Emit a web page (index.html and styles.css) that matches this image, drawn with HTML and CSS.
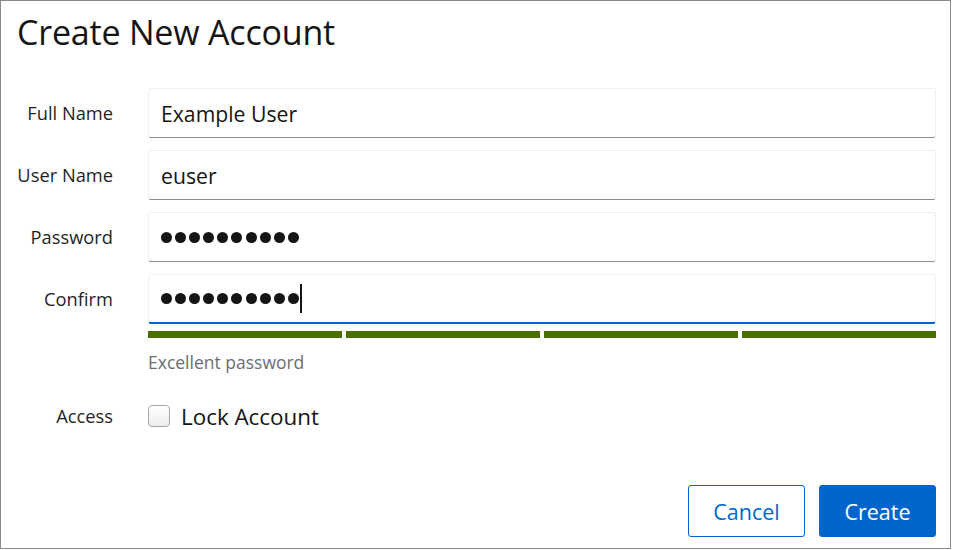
FILE: index.html
```html
<!DOCTYPE html>
<html>
<head>
<meta charset="utf-8">
<link rel="stylesheet" href="styles.css">
</head>
<body>
<div class="dialog">
  <h1 class="title">Create New Account</h1>
  <form class="form">
    <label class="label">Full Name</label>
    <div class="input"><span class="value">Example User</span></div>

    <label class="label">User Name</label>
    <div class="input"><span class="value">euser</span></div>

    <label class="label">Password</label>
    <div class="input">
      <span class="dots"><i></i><i></i><i></i><i></i><i></i><i></i><i></i><i></i><i></i><i></i></span>
    </div>

    <label class="label">Confirm</label>
    <div class="field">
      <div class="input focused">
        <span class="dots"><i></i><i></i><i></i><i></i><i></i><i></i><i></i><i></i><i></i><i></i></span><span class="caret"></span>
      </div>
      <div class="meter"><span></span><span></span><span></span><span></span></div>
      <div class="helper">Excellent password</div>
    </div>

    <label class="label access">Access</label>
    <div class="check-row">
      <span class="checkbox"></span>
      <span class="check-label">Lock Account</span>
    </div>
  </form>
  <div class="footer">
    <button type="button" class="btn secondary">Cancel</button>
    <button type="button" class="btn primary">Create</button>
  </div>
</div>
</body>
</html>
```

FILE: styles.css
```css
* { box-sizing: border-box; }
html, body { margin: 0; padding: 0; background: #fff; }
body {
  font-family: "Open Sans", "Noto Sans", sans-serif;
  color: #151515;
}
.dialog {
  width: 951px;
  height: 549px;
  border: 1px solid #8a8a8a;
  display: flex;
  flex-direction: column;
}
.title {
  margin: 0;
  padding: 11px 0 0 16px;
  font-size: 34px;
  font-weight: 400;
  line-height: 40px;
  letter-spacing: -0.2px;
}
.form {
  display: grid;
  grid-template-columns: 96px 1fr;
  column-gap: 35px;
  row-gap: 12px;
  padding: 36px 14px 0 16px;
  align-items: start;
}
.label {
  text-align: right;
  font-size: 18.3px;
  line-height: 50px;
  height: 50px;
  color: #1f1f1f;
}
.input {
  height: 50px;
  border: 1px solid #f0f0f0;
  border-bottom-color: #8a8d90;
  border-radius: 3px;
  display: flex;
  align-items: center;
  padding: 0 12px;
  font-size: 21.2px;
  background: #fff;
}
.input.focused {
  border-bottom: 2px solid #0066cc;
}
.dots { display: flex; gap: 3.1px; }
.dots i {
  display: block;
  width: 11px;
  height: 11px;
  border-radius: 50%;
  background: #151515;
}
.caret {
  display: block;
  width: 2px;
  height: 29px;
  background: #151515;
  margin-left: 1px;
}
.meter {
  display: flex;
  gap: 4px;
  margin-top: 7px;
}
.meter span {
  flex: 1;
  height: 7px;
  background: #4a6e00;
}
.helper {
  margin-top: 12px;
  font-size: 17.5px;
  color: #6a6e73;
  line-height: 24px;
}
.access { margin-top: 5px; }
.check-row {
  margin-top: 5px;
  height: 50px;
  display: flex;
  align-items: center;
  gap: 11px;
}
.checkbox {
  width: 22px;
  height: 22px;
  border: 1px solid #a8a8a8;
  border-radius: 4px;
  background: linear-gradient(#ffffff, #ececec);
}
.check-label { font-size: 22.4px; }
.footer {
  margin-top: auto;
  display: flex;
  justify-content: flex-end;
  gap: 14px;
  padding: 0 14px 11px 0;
}
.btn {
  font-family: inherit;
  font-size: 21.5px;
  height: 52px;
  width: 117px;
  border-radius: 3px;
  cursor: pointer;
}
.btn.secondary {
  background: #fff;
  color: #0066cc;
  border: 1px solid #0066cc;
}
.btn.primary {
  background: #0066cc;
  color: #fff;
  border: 1px solid #0066cc;
}
```
